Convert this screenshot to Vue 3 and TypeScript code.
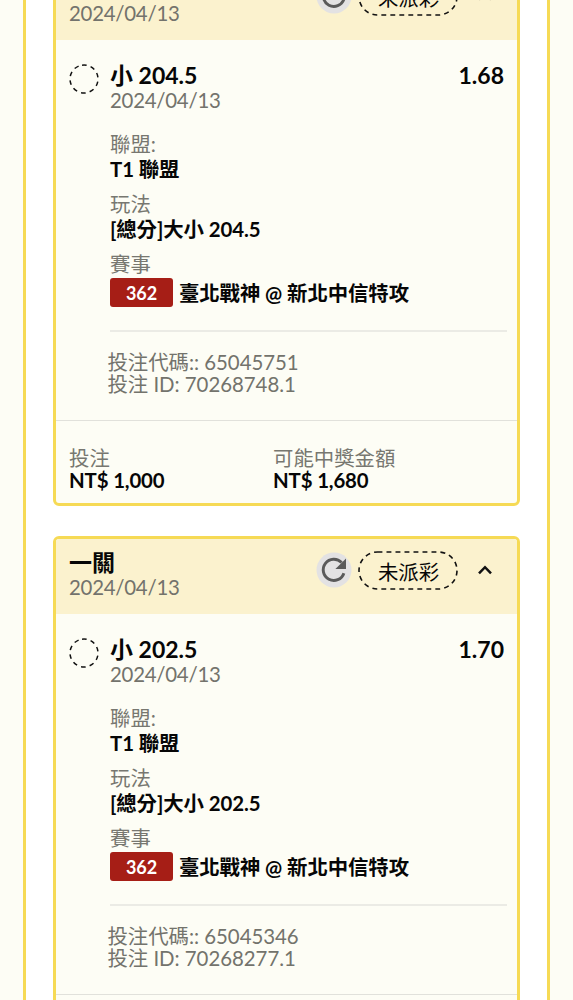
<script setup lang="ts">
interface Bet {
  id: number
  line: string
  odds: string
  date: string
  code: string
  betId: string
  payout: string
}

const bets: Bet[] = [
  { id: 1, line: '204.5', odds: '1.68', date: '2024/04/13', code: '65045751', betId: '70268748.1', payout: '1,680' },
  { id: 2, line: '202.5', odds: '1.70', date: '2024/04/13', code: '65045346', betId: '70268277.1', payout: '1,700' },
]
</script>

<template>
  <main class="screen">
    <div class="panel">
      <article v-for="bet in bets" :key="bet.id" class="card">
        <header class="head">
          <div class="head-text">
            <h2 class="title">一關</h2>
            <p class="date">{{ bet.date }}</p>
          </div>
          <svg class="refresh" viewBox="0 0 36 36">
            <circle cx="18" cy="18" r="17.5" fill="#e3e2e3" />
            <path d="M27.9 21.2A10.6 10.6 0 1 1 25.6 10.6" fill="none" stroke="#5a5a5a" stroke-width="2.9" />
            <path d="M30 6.6V17H19.4Z" fill="#5a5a5a" />
          </svg>
          <div class="pill">
            <svg class="pill-line" viewBox="0 0 100 39">
              <rect x="1" y="1" width="98" height="37" rx="18.5" fill="none" stroke="#111" stroke-width="1.6" stroke-dasharray="4.9 4.1" />
            </svg>
            <span>未派彩</span>
          </div>
          <svg class="chevron" viewBox="0 0 16 10">
            <path d="M2 8.4 8 2.2 14 8.4" fill="none" stroke="#111" stroke-width="2.5" />
          </svg>
        </header>

        <section class="body">
          <svg class="ring" viewBox="0 0 30 30">
            <circle cx="15" cy="15" r="14" fill="none" stroke="#111" stroke-width="1.5" stroke-dasharray="4.6 4.2" transform="rotate(-98 15 15)" />
          </svg>
          <div class="detail">
            <div class="pick"><span>小 {{ bet.line }}</span><span class="odds">{{ bet.odds }}</span></div>
            <p class="date">{{ bet.date }}</p>
            <dl class="facts">
              <dt>聯盟:</dt>
              <dd>T1 聯盟</dd>
              <dt>玩法</dt>
              <dd>[總分]大小 {{ bet.line }}</dd>
              <dt>賽事</dt>
              <dd class="match"><span class="badge">362</span><span class="teams">臺北戰神 @ 新北中信特攻</span></dd>
            </dl>
            <div class="codes">
              <p>投注代碼:: {{ bet.code }}</p>
              <p>投注 ID: {{ bet.betId }}</p>
            </div>
          </div>
        </section>

        <footer class="foot">
          <div><p class="label">投注</p><p class="amount">NT$ 1,000</p></div>
          <div><p class="label">可能中獎金額</p><p class="amount">NT$ {{ bet.payout }}</p></div>
        </footer>
      </article>
    </div>
  </main>
</template>

<style>
body { margin: 0; background: #fdfdf5; }
</style>

<style scoped>
.screen {
  box-sizing: border-box;
  height: 1000px;
  overflow: hidden;
  padding: 0 23px;
  background: #fdfdf5;
  color: #060606;
  font-family: Lato, "Noto Sans CJK TC", sans-serif;
  font-size: 20.4px;
  line-height: 22px;
  white-space: nowrap;
}
p, h2, dl, dd, dt { margin: 0; }
.panel {
  box-sizing: border-box;
  width: 527px;
  padding: 0 27px;
  background: #fff;
  border: solid #f6da55;
  border-width: 0 3px;
}
.card {
  box-sizing: border-box;
  height: 544px;
  margin-bottom: 30px;
  border: 3px solid #f6da55;
  border-radius: 6px;
  background: #fdfdf5;
  overflow: hidden;
}
.card:first-child { margin-top: -38px; }
.head {
  display: flex;
  align-items: flex-start;
  box-sizing: border-box;
  height: 74.5px;
  padding: 12px 24px 0 13px;
  background: #fbf2ce;
}
.head-text { flex: 1; }
.title { font-size: 23px; line-height: 22px; padding-bottom: 2px; font-weight: 700; }
.date { line-height: 24px; color: #73736c; letter-spacing: -0.25px; }
.refresh { width: 36px; height: 36px; margin: 1px 6px 0 0; }
.pill {
  position: relative;
  display: grid;
  place-items: center;
  width: 100px;
  height: 39px;
}
.pill span { padding: 3px 0 0 1px; }
.pill-line { position: absolute; inset: 0; width: 100px; height: 39px; }
.chevron { width: 16px; height: 10px; margin: 14px 0 0 19px; }
.body { display: flex; height: 380.5px; padding: 0 9px 0 13px; box-sizing: border-box; }
.ring { width: 30px; height: 30px; margin: 24.5px 11px 0 0; flex: none; }
.detail { flex: 1; padding-top: 22px; }
.pick { display: flex; justify-content: space-between; font-size: 23px; line-height: 26px; font-weight: 700; padding-right: 4px; }
.facts { padding-top: 20px; height: 198px; }
dt { line-height: 25px; color: #777770; }
dd { line-height: 25px; padding-bottom: 10px; font-weight: 700; letter-spacing: -0.08px; }
.match { display: flex; align-items: center; gap: 6px; height: 29px; padding: 1px 0 0; }
.badge {
  width: 63px;
  height: 29px;
  border-radius: 3px;
  background: #a61e16;
  color: #fff;
  font-size: 18px;
  line-height: 30px;
  text-align: center;
}
.teams { padding-top: 2px; }
.codes { border-top: 2px solid #ebebe5; margin-right: 1px; padding: 19px 0 0; color: #73736c; }
.codes p { margin-left: -2.5px; letter-spacing: -0.03px; }
.foot {
  display: grid;
  grid-template-columns: 204px 1fr;
  border-top: 1.5px solid #e1e1db;
  padding: 26px 13px 0;
}
.label { color: #777770; }
.amount { font-weight: 700; letter-spacing: -0.15px; }
</style>
